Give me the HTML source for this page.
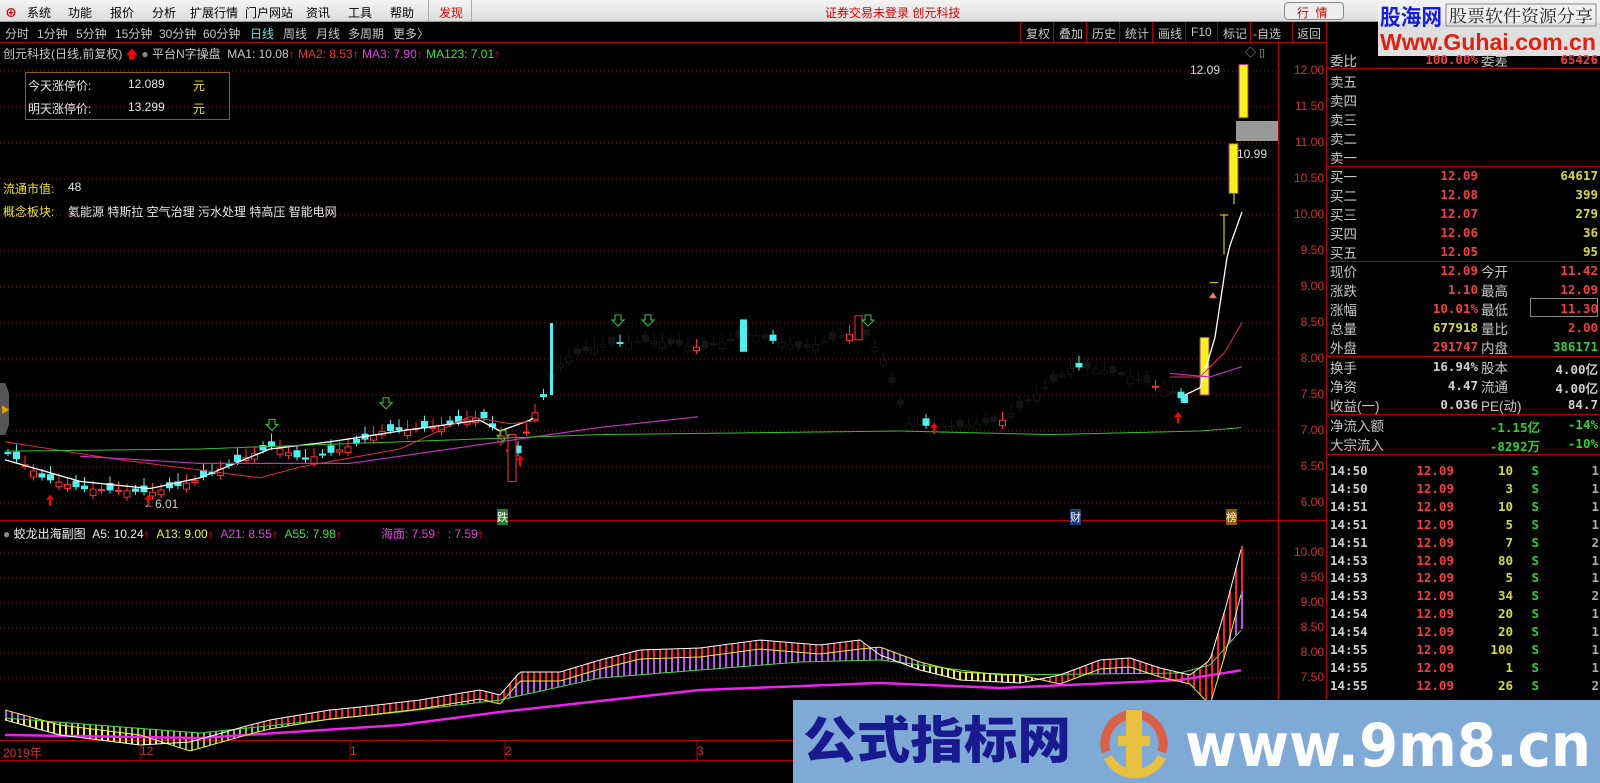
<!DOCTYPE html>
<html><head><meta charset="utf-8">
<style>
*{margin:0;padding:0;box-sizing:border-box}
body{width:1600px;height:783px;background:#000;overflow:hidden;position:relative;font-family:"Liberation Sans","Noto Sans CJK SC",sans-serif;font-size:12px;color:#c0c0c0}
.abs{position:absolute;white-space:nowrap}
#menu{left:0;top:0;width:1600px;height:22px;background:linear-gradient(#f4f4f4,#dcdcdc);border-bottom:1px solid #999}
#menu span{position:absolute;top:4px;font-size:12px;color:#000}
#tb{left:0;top:22px;width:1326px;height:21px;background:#000;border-bottom:1px solid #a00}
#tb span{position:absolute;top:3px;font-size:12px;color:#c8c8c8}
.tbr{position:absolute;top:0;height:21px;border-left:1px solid #a00;padding:3px 5px 0 5px;color:#c8c8c8}
.rp{position:absolute;left:1330px;font-size:13.5px;color:#c8c8c8}
.num{position:absolute;font-family:"DejaVu Sans Mono","Liberation Mono",monospace;font-weight:bold;font-size:12.5px;text-align:right}
.hl{position:absolute;left:1326px;width:274px;height:1px;background:#b00000}
.ax{position:absolute;left:1282px;width:42px;text-align:right;color:#d03030;font-size:12px}
</style></head><body>
<div id="menu" class="abs">
<span style="left:5px;color:#c00;font-weight:bold">⊕</span>
<span style="left:27px">系统</span><span style="left:68px">功能</span><span style="left:110px">报价</span><span style="left:152px">分析</span><span style="left:190px">扩展行情</span><span style="left:245px">门户网站</span><span style="left:306px">资讯</span><span style="left:348px">工具</span><span style="left:390px">帮助</span>
<span style="left:428px;top:0;height:22px;width:44px;border-left:1px solid #aaa;border-right:1px solid #aaa;padding:4px 0 0 10px;color:#d00">发现</span>
<span style="left:825px;color:#d00">证券交易未登录 创元科技</span>
<span style="left:1284px;top:2px;height:18px;width:60px;border:1px solid #888;border-radius:4px;background:#eee;color:#c00;padding:1px 0 0 12px">行 &nbsp;情</span>
</div>
<svg class="abs" style="left:1378px;top:0" width="222" height="56">
<rect width="222" height="56" fill="#f0f0f0" opacity="0.93"/>
<text x="2" y="25" font-size="22" font-weight="bold" fill="#1420d8" font-family="Noto Sans CJK SC,sans-serif" textLength="62" lengthAdjust="spacingAndGlyphs">股海网</text>
<rect x="68" y="4" width="150" height="22" fill="none" stroke="#888"/>
<text x="71" y="22" font-size="17" fill="#222" font-family="Noto Serif CJK SC,serif" textLength="144" lengthAdjust="spacingAndGlyphs">股票软件资源分享</text>
<text x="2" y="50" font-size="23" font-weight="bold" fill="#e02010" font-family="Liberation Sans,sans-serif" textLength="216" lengthAdjust="spacingAndGlyphs">Www.Guhai.com.cn</text>
</svg>
<div id="tb" class="abs">
<span style="left:5px">分时</span><span style="left:37px">1分钟</span><span style="left:76px">5分钟</span><span style="left:115px">15分钟</span><span style="left:159px">30分钟</span><span style="left:203px">60分钟</span><span style="left:250px;color:#6fe0e0">日线</span><span style="left:283px">周线</span><span style="left:316px">月线</span><span style="left:348px">多周期</span><span style="left:393px">更多〉</span>
<div class="tbr" style="left:1020px">复权</div><div class="tbr" style="left:1053px">叠加</div><div class="tbr" style="left:1086px">历史</div><div class="tbr" style="left:1119px">统计</div><div class="tbr" style="left:1152px">画线</div><div class="tbr" style="left:1185px">F10</div><div class="tbr" style="left:1217px">标记</div><div class="tbr" style="left:1250px;padding:3px 2px">-自选</div><div class="tbr" style="left:1292px;padding:3px 4px">返回</div>
</div>
<div class="abs" style="left:1326px;top:22px;width:1px;height:761px;background:#b00000"></div>
<div class="abs" style="left:1278px;top:43px;width:1px;height:718px;background:#b00000"></div>
<div class="abs" style="left:0;top:520px;width:1326px;height:1px;background:#b00000"></div>
<div class="abs" style="left:0;top:740px;width:1278px;height:1px;background:#b00000"></div>
<div class="abs" style="left:0;top:760px;width:1326px;height:1px;background:#b00000"></div>

<svg class="abs" style="left:0;top:0" width="1600" height="783" id="sv"></svg>

<div class="abs" style="left:3px;top:45px;color:#c8c8c8">创元科技(日线,前复权) <span style="color:#f00">🡅</span> <span style="color:#888">●</span> 平台N字操盘 &nbsp;MA1: 10.08<span style="color:#f00">↑</span> <span style="color:#f03030">MA2: 8.53↑</span> <span style="color:#e040e0">MA3: 7.90</span><span style="color:#f00">↑</span> <span style="color:#40e040">MA123: 7.01</span><span style="color:#f00">↑</span></div>
<div class="abs" style="left:1245px;top:44px;color:#aaa;font-size:11px">◇ ▯</div>
<div class="abs" style="left:25px;top:72px;width:205px;height:48px;border:1px solid #8b5a2b"></div>
<div class="abs" style="left:28px;top:77px;color:#e8e8e8">今天涨停价:</div><div class="abs" style="left:128px;top:77px;color:#e8e8e8">12.089</div><div class="abs" style="left:193px;top:77px;color:#f0e020">元</div>
<div class="abs" style="left:28px;top:100px;color:#e8e8e8">明天涨停价:</div><div class="abs" style="left:128px;top:100px;color:#e8e8e8">13.299</div><div class="abs" style="left:193px;top:100px;color:#f0e020">元</div>
<div class="abs" style="left:3px;top:180px;color:#f0e020">流通市值:</div><div class="abs" style="left:68px;top:180px;color:#e8e8e8">48</div>
<div class="abs" style="left:3px;top:203px;color:#f0e020">概念板块:</div><div class="abs" style="left:68px;top:203px;color:#e8e8e8">氦能源 特斯拉 空气治理 污水处理 特高压 智能电网</div>
<div class="abs" style="left:1190px;top:63px;color:#ddd">12.09</div>
<div class="abs" style="left:1236px;top:121px;width:42px;height:20px;background:#999"></div>
<div class="abs" style="left:1237px;top:147px;color:#ddd">10.99</div>
<div class="abs" style="left:0;top:383px;width:9px;height:52px;background:#555;clip-path:polygon(0 0,60% 0,100% 20%,100% 80%,60% 100%,0 100%)"></div>
<div class="abs" style="left:1px;top:403px;color:#e0a000;font-size:9px">▶</div>
<div class="abs" style="left:143px;top:497px;color:#ccc">←6.01</div>
<div class="abs" style="left:497px;top:509px;background:#2a7a2a;color:#fff;font-size:11px">跌</div>
<div class="abs" style="left:1070px;top:509px;background:#1a3a7a;color:#fff;font-size:11px">财</div>
<div class="abs" style="left:1226px;top:509px;background:#8a5a00;color:#fff;font-size:11px">榜</div>

<div class="abs" style="left:3px;top:525px;color:#eee"><span style="color:#888">●</span> 蛟龙出海副图 &nbsp;A5: 10.24<span style="color:#f00">↑</span> <span style="color:#f0f040">&nbsp;A13: 9.00</span><span style="color:#f00">↑</span> <span style="color:#e040e0">&nbsp;A21: 8.55</span><span style="color:#f00">↑</span> <span style="color:#40e040">&nbsp;A55: 7.98</span><span style="color:#f00">↑</span></div>
<div class="abs" style="left:381px;top:525px;color:#e040e0">海面: 7.59<span style="color:#f00">↑</span> &nbsp;: 7.59<span style="color:#f00">↑</span></div>

<div class="abs" style="left:3px;top:744px;color:#d03030">2019年</div>
<div class="abs" style="left:140px;top:744px;color:#d03030">12</div>
<div class="abs" style="left:350px;top:744px;color:#d03030">1</div>
<div class="abs" style="left:505px;top:744px;color:#d03030">2</div>
<div class="abs" style="left:697px;top:744px;color:#d03030">3</div>

<div id="axes"></div>
<div id="rp"></div>

<svg class="abs" style="left:793px;top:700px" width="807" height="83">
<rect width="807" height="83" fill="#80aad6"/>
<text x="10" y="58" font-size="50" font-weight="900" fill="#1a1a90" font-family="Noto Sans CJK SC,sans-serif" textLength="268" lengthAdjust="spacingAndGlyphs">公式指标网</text>
<g transform="translate(305,2)">
<path d="M8 50 A30 30 0 0 1 36 12" stroke="#d86048" stroke-width="9" fill="none"/><path d="M36 12 A30 30 0 0 1 64 50" stroke="#d86048" stroke-width="9" fill="none"/><path d="M10 55 A30 30 0 0 0 64 55" stroke="#e8c040" stroke-width="9" fill="none"/><rect x="28" y="8" width="16" height="66" fill="#e8c040"/><rect x="20" y="34" width="32" height="10" fill="#e8c040"/></g>
<text x="392" y="66" font-size="60" font-weight="bold" fill="#fff" font-family="DejaVu Sans,sans-serif" textLength="406" lengthAdjust="spacingAndGlyphs">www.9m8.cn</text>
</svg>

<script>
const NS="http://www.w3.org/2000/svg",sv=document.getElementById('sv');
function el(t,a){const e=document.createElementNS(NS,t);for(const k in a)e.setAttribute(k,a[k]);sv.appendChild(e);return e}
const Y=p=>71+(12-p)*72;
for(let p=6;p<=12;p+=0.5)el('line',{x1:0,x2:1278,y1:Y(p),y2:Y(p),stroke:'#6a1a1a','stroke-dasharray':'1 3'});
for(let v=7.5;v<=10;v+=0.5){const y=553+(10-v)*50;el('line',{x1:0,x2:1278,y1:y,y2:y,stroke:'#6a1a1a','stroke-dasharray':'1 3'})}
function interp(pts,x){for(let i=0;i<pts.length-1;i++){if(x<=pts[i+1][0]){const t=(x-pts[i][0])/(pts[i+1][0]-pts[i][0]);return pts[i][1]+t*(pts[i+1][1]-pts[i][1])}}return pts[pts.length-1][1]}
function line(pts,col,w,fn){let d='';for(let x=pts[0][0];x<=pts[pts.length-1][0];x+=3){d+=(d?'L':'M')+x+' '+fn(interp(pts,x))}el('path',{d:d,stroke:col,'stroke-width':w,fill:'none'})}
const P=[[5,6.7],[40,6.35],[80,6.2],[150,6.15],[190,6.3],[230,6.55],[270,6.8],[300,6.6],[340,6.75],[380,7.0],[430,7.05],[480,7.2],[500,6.9],[512,6.6],[530,7.2],[560,8.0],[600,8.2],[650,8.25],[700,8.15],[745,8.35],[800,8.15],[860,8.4],[880,8.0],[905,7.1],[950,7.05],[1000,7.15],[1070,7.9],[1100,7.85],[1140,7.7],[1180,7.45]];
let i=0;
for(let x=5;x<1185;x+=8.5,i++){
 const c=interp(P,x),o=c+Math.sin(i*1.7)*0.09,h=Math.max(o,c)+0.05+Math.abs(Math.sin(i*2.3))*0.08,l=Math.min(o,c)-0.05;
 const mid=x>540&&x<1175;
 const up=c>o;
 let col=up?'#ff3030':'#50f0f0';
 if(mid){col=(i%9==0)?(up?'#ff3030':'#50f0f0'):'#141414'}
 el('line',{x1:x+3,x2:x+3,y1:Y(h),y2:Y(l),stroke:col});
 const y1=Y(Math.max(o,c)),hh=Math.max(1,Y(Math.min(o,c))-y1);
 el('rect',{x:x,y:y1,width:6,height:hh,fill:up?'#000':col,stroke:col});
}
el('rect',{x:550,y:Y(8.5),width:3,height:Y(7.5)-Y(8.5),fill:'#50f0f0'});
el('rect',{x:740,y:Y(8.55),width:7,height:Y(8.1)-Y(8.55),fill:'#50f0f0'});
el('rect',{x:508,y:Y(6.95),width:8,height:Y(6.3)-Y(6.95),fill:'#000',stroke:'#ff3030'});
el('rect',{x:855,y:Y(8.6),width:7,height:24,fill:'#000',stroke:'#ff3030'});
[[1200,8.3,7.5],[1229,10.99,10.3],[1239,12.09,11.35]].forEach(a=>{el('rect',{x:a[0],y:Y(a[1]),width:9,height:Y(a[2])-Y(a[1]),fill:'#f8f020',stroke:'#a04080'})});
el('line',{x1:1234,x2:1234,y1:Y(10.3),y2:Y(10.15),stroke:'#f8f020'});
el('line',{x1:1224,x2:1224,y1:Y(10.0),y2:Y(9.45),stroke:'#f8f020'});el('line',{x1:1220,x2:1228,y1:Y(10.0),y2:Y(10.0),stroke:'#f8f020'});
el('line',{x1:1210,x2:1218,y1:Y(9.06),y2:Y(9.06),stroke:'#f8f020'});
el('path',{d:'M1209 '+(Y(8.9)+4)+'l4 -6l4 6z',fill:'#f08050'});
el('rect',{x:1181,y:Y(7.5),width:7,height:8,fill:'#50f0f0'});
line([[5,6.6],[80,6.3],[150,6.2],[200,6.35],[270,6.75],[330,6.85],[400,7.0],[480,7.15],[500,7.0],[530,7.15],[535,7.2]],'#fff',1.3,Y);
line([[1185,7.5],[1200,7.6],[1215,8.3],[1228,9.5],[1243,10.08]],'#fff',1.3,Y);
line([[5,6.85],[120,6.6],[260,6.35],[300,6.5],[400,6.75],[470,7.2],[510,7.1],[540,7.15]],'#e03030',1,Y);
line([[1170,7.75],[1200,7.75],[1225,8.1],[1243,8.53]],'#e03030',1,Y);
line([[80,6.65],[200,6.55],[350,6.55],[500,6.85],[600,7.05],[700,7.2]],'#c030c0',1.2,Y);
line([[1170,7.8],[1210,7.75],[1243,7.9]],'#c030c0',1.2,Y);
line([[5,6.72],[200,6.75],[400,6.85],[600,6.95],[900,7.0],[1050,6.95],[1200,7.0],[1243,7.05]],'#30c030',1,Y);
[[50,6.1],[148,6.1],[520,6.65],[934,7.1],[1178,7.25]].forEach(a=>{const y=Y(a[1]);el('path',{d:`M${a[0]-4} ${y+4}h3v6h2v-6h3l-4-5z`,fill:'#f00'})});
[[272,7.05],[386,7.35],[618,8.5],[648,8.5],[868,8.5],[503,6.9]].forEach(a=>{const y=Y(a[1]);el('path',{d:`M${a[0]-3} ${y-8}h6v5h3l-6 6l-6-6h3z`,fill:'none',stroke:'#30d030'})});
const A5=[[5,720],[60,735],[140,745],[190,742],[250,725],[270,720],[330,710],[360,707],[420,700],[480,690],[500,695],[520,672],[560,672],[600,660],[640,650],[700,648],[760,640],[820,645],[860,640],[880,655],[920,670],[960,680],[1020,683],[1060,675],[1100,660],[1130,658],[1160,668],[1190,675],[1210,660],[1225,610],[1243,542]];
const A13=A5.map(p=>[p[0],p[1]+(p[0]<190?-10:p[0]>1200?45:(p[0]>870&&p[0]<1050)?-8:9)]);
const A55=[[5,718],[200,733],[400,712],[500,700],[600,678],[800,662],[880,660],[1000,675],[1180,673],[1210,665],[1243,628]];
const SEA=[[5,735],[200,738],[400,725],[500,712],[700,690],[880,683],[1000,688],[1180,680],[1243,670]];
for(let x=6;x<1243;x+=6){const a=interp(A5,x),b=interp(A13,x),c=interp(A55,x);
 el('line',{x1:x,x2:x,y1:a,y2:b,stroke:a<b?'#ff2020':'#f8f020','stroke-width':2});
 if(b<c)el('line',{x1:x,x2:x,y1:b,y2:c,stroke:'#c050f0','stroke-width':2});
 else if(x<300) el('line',{x1:x,x2:x,y1:c,y2:b,stroke:'#90c030','stroke-width':2});}
const ID=v=>v;
line(SEA,'#f020f0',2.5,ID);line(A55,'#40e040',1,ID);line(A13,'#f0f040',1,ID);line(A5,'#fff',1,ID);
[140,350,505,697].forEach(x=>el('line',{x1:x,x2:x,y1:741,y2:760,stroke:'#b00000'}));
let ax='';[12,11.5,11,10.5,10,9.5,9,8.5,8,7.5,7,6.5,6].forEach(p=>{ax+=`<div class="ax abs" style="top:${Y(p)-8}px">${p.toFixed(2)}</div>`});
[10,9.5,9,8.5,8,7.5].forEach(v=>{ax+=`<div class="ax abs" style="top:${553+(10-v)*50-8}px">${v.toFixed(2)}</div>`});
document.getElementById('axes').innerHTML=ax;
let r='';
function row(y,lab,v1,c1,lab2,v2,c2){r+=`<div class="rp abs" style="top:${y}px">${lab}</div>`;if(v1)r+=`<div class="num" style="left:1390px;width:88px;top:${y+2}px;color:${c1}">${v1}</div>`;if(lab2)r+=`<div class="rp abs" style="left:1481px;top:${y}px">${lab2}</div>`;if(v2)r+=`<div class="num" style="left:1510px;width:88px;top:${y+2}px;color:${c2}">${v2}</div>`}
const R='#f04040',Yl='#d8d840',G='#30d030',W='#d0d0d0';
row(50,'委比','100.00%',R,'委差','65426',R);
['卖五','卖四','卖三','卖二','卖一'].forEach((s,k)=>row(71+k*19,s));
[['买一','12.09','64617'],['买二','12.08','399'],['买三','12.07','279'],['买四','12.06','36'],['买五','12.05','95']].forEach((a,k)=>row(166+k*19,a[0],a[1],R,'',a[2],Yl));
row(261,'现价','12.09',R,'今开','11.42',R);row(280,'涨跌','1.10',R,'最高','12.09',R);row(299,'涨幅','10.01%',R,'最低','11.30',R);row(318,'总量','677918',Yl,'量比','2.00',R);row(337,'外盘','291747',R,'内盘','386171',G);
row(357,'换手','16.94%',W,'股本','4.00亿',W);row(376,'净资','4.47',W,'流通','4.00亿',W);row(395,'收益(一)','0.036',W,'PE(动)','84.7',W);
r+=`<div class="rp abs" style="top:415px">净流入额</div><div class="num" style="left:1440px;width:100px;top:417px;color:${G}">-1.15亿</div><div class="num" style="left:1540px;width:58px;top:417px;color:${G}">-14%</div>`;
r+=`<div class="rp abs" style="top:434px">大宗流入</div><div class="num" style="left:1440px;width:100px;top:436px;color:${G}">-8292万</div><div class="num" style="left:1540px;width:58px;top:436px;color:${G}">-10%</div>`;
[['14:50',10,1],['14:50',3,1],['14:51',10,1],['14:51',5,1],['14:51',7,2],['14:53',80,1],['14:53',5,1],['14:53',34,2],['14:54',20,1],['14:54',20,1],['14:55',100,1],['14:55',1,1],['14:55',26,2]].forEach((a,k)=>{const y=463+k*17.9;
r+=`<div class="num" style="left:1330px;width:40px;text-align:left;top:${y}px;color:${W}">${a[0]}</div><div class="num" style="left:1400px;width:54px;top:${y}px;color:${R}">12.09</div><div class="num" style="left:1480px;width:33px;top:${y}px;color:${Yl}">${a[1]}</div><div class="num" style="left:1527px;width:12px;top:${y}px;color:${G}">S</div><div class="num" style="left:1585px;width:14px;top:${y}px;color:#aaa">${a[2]}</div>`});
[68,166,261,356,414,454].forEach(y=>r+=`<div class="hl" style="top:${y}px"></div>`);
r+=`<div class="abs" style="left:1530px;top:298px;width:68px;height:19px;border:1px solid #888"></div>`;
document.getElementById('rp').innerHTML=r;
</script>
</body></html>
